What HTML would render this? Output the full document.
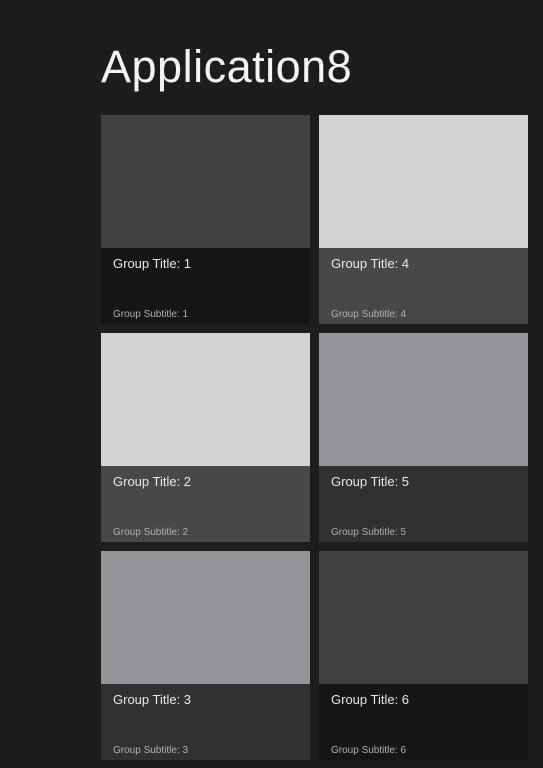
<!DOCTYPE html>
<html><head><style>
body{margin:0;width:543px;height:768px;background:#1d1d1d;overflow:hidden;font-family:"Liberation Sans",sans-serif;position:relative}
h1{position:absolute;left:101px;top:39px;margin:0;font-weight:normal;font-size:45px;color:#f4f4f4;letter-spacing:0.5px;line-height:56px}
.t{position:absolute;width:209px;height:209px}
.i{height:133px}
.l{height:76px;position:relative;color:#e8e8e8}
.a{position:absolute;left:12px;top:8px;font-size:13px}
.b{position:absolute;left:12px;top:61px;font-size:10px;color:#b0b0b0}
</style></head><body>
<h1>Application8</h1>
<div class="t" style="left:101px;top:115px"><div class="i" style="background:#414143"></div><div class="l" style="background:#161616"><span class="a">Group Title: 1</span><span class="b">Group Subtitle: 1</span></div></div>
<div class="t" style="left:319px;top:115px"><div class="i" style="background:#d2d3d5"></div><div class="l" style="background:#474848"><span class="a">Group Title: 4</span><span class="b">Group Subtitle: 4</span></div></div>
<div class="t" style="left:101px;top:333px"><div class="i" style="background:#d2d3d5"></div><div class="l" style="background:#474848"><span class="a">Group Title: 2</span><span class="b">Group Subtitle: 2</span></div></div>
<div class="t" style="left:319px;top:333px"><div class="i" style="background:#949598"></div><div class="l" style="background:#303133"><span class="a">Group Title: 5</span><span class="b">Group Subtitle: 5</span></div></div>
<div class="t" style="left:101px;top:551px"><div class="i" style="background:#949598"></div><div class="l" style="background:#303133"><span class="a">Group Title: 3</span><span class="b">Group Subtitle: 3</span></div></div>
<div class="t" style="left:319px;top:551px"><div class="i" style="background:#414143"></div><div class="l" style="background:#161616"><span class="a">Group Title: 6</span><span class="b">Group Subtitle: 6</span></div></div>
</body></html>
